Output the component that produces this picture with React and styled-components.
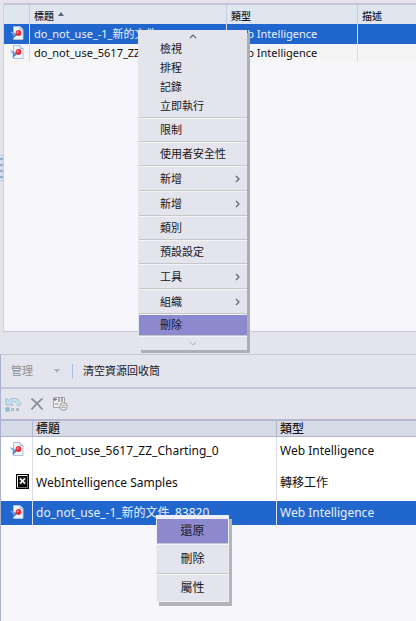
import React from "react";
import styled, { createGlobalStyle, css } from "styled-components";

const GlobalStyle = createGlobalStyle`
  * { box-sizing: border-box; }
  body {
    margin: 0;
    background: #f6f6fb;
    color: #17171c;
    font-family: "Noto Sans", "Noto Sans CJK TC", sans-serif;
  }
  button { font-family: inherit; color: inherit; }
`;

const Page = styled.main`
  display: flex;
  flex-direction: column;
  min-height: 100vh;
  overflow: hidden;
`;

const UpperPane = styled.section`
  position: relative;
  display: flex;
  background: #e4e4ec;
  padding: 3px 0 22px;
`;

const Splitter = styled.div`
  display: flex;
  align-items: center;
  width: 4px;
  border-right: 1px solid #cfcfdd;
`;

const Grip = styled.div`
  width: 4px;
  height: 28px;
  background: repeating-linear-gradient(#d3daea 0 4px, #9aacce 4px 6px);
`;

const ListBody = styled.div`
  flex: 1;
  min-height: 329px;
  background: #f6f6fb;
  border-top: 2px solid #c5c5d7;
  border-bottom: 1px solid #c9c9da;
`;

const Table = styled.table`
  width: 100%;
  table-layout: fixed;
  border-collapse: separate;
  border-spacing: 0;
  font-size: ${(p) => (p.$large ? 12 : 11)}px;
  line-height: 16px;
`;

const Col = styled.col`
  width: ${(p) => p.$width};
`;

const HeadCell = styled.th`
  height: 19px;
  padding: 2px 4px 0;
  text-align: left;
  font-size: 10px;
  line-height: 16px;
  font-weight: 500;
  background: #dfe6f0;
  border-right: 1px solid #c9cfde;
  white-space: nowrap;
  &:last-child { border-right: 0; }
  ${(p) => p.$large && css`
    height: 18px;
    padding: 0 3px;
    font-size: 12px;
    line-height: 15px;
    background: #d5dce8;
    border-top: 2px solid #b6b6cc;
    border-bottom: 1px solid #b0b0c8;
    border-right-color: #b6b6cc;
  `}
`;

const SortButton = styled.button`
  display: flex;
  align-items: center;
  gap: 4px;
  padding: 0;
  border: 0;
  background: none;
  font-size: inherit;
  font-weight: inherit;
  line-height: inherit;
  svg { margin-bottom: 4px; }
`;

const Row = styled.tr`
  height: ${(p) => p.$height}px;
  background: ${(p) => (p.$selected ? "#2166cc" : p.$plain ? "#f5f5f5" : "#ffffff")};
  color: ${(p) => (p.$selected ? "#eaf1ff" : "#101014")};
`;

const Cell = styled.td`
  padding: 0 4px;
  border-right: 1px solid #dcdce6;
  white-space: nowrap;
  overflow: hidden;
  &:last-child { border-right: 0; }
  ${(p) => p.$large && css`padding: 0 3px;`}
`;

const IconCell = styled(Cell)`
  padding: 0 3px 3px;
  text-align: ${(p) => (p.$end ? "right" : "center")};
  line-height: 14px;
  svg { display: inline-block; vertical-align: middle; }
`;

const LowerPane = styled.section`
  flex: 1;
  position: relative;
  border-left: 1px solid #a9b1cd;
  border-top: 1px solid #c5c5d7;
`;

const Toolbar = styled.div`
  display: flex;
  align-items: center;
  background: #e4e4ec;
  height: 32px;
  padding: 0 10px;
  font-size: 11px;
  ${(p) => p.$icons && css`
    padding: 0 4px;
    gap: 8px;
    border-top: 2px solid #c5c5d9;
  `}
`;

const ToolButton = styled.button`
  display: flex;
  align-items: center;
  gap: 21px;
  padding: 0;
  border: 0;
  background: none;
  font-size: 11px;
  line-height: 16px;
  white-space: nowrap;
  &:disabled { color: #91919b; }
`;

const Divider = styled.span`
  width: 1px;
  height: 15px;
  margin: 0 10px 0 12px;
  background: #a7c2e2;
`;

const MenuBase = styled.div`
  position: absolute;
  z-index: 1;
  display: flex;
  flex-direction: column;
  background: #e4e4ec;
`;

const LongMenu = styled(MenuBase)`
  left: 138px;
  top: 30px;
  width: 109px;
  padding: 0 0 0 1px;
  box-shadow: 3px 3px 0 #adadb4;
`;

const ShortMenu = styled(MenuBase)`
  left: 155px;
  top: 160px;
  width: 73px;
  border: 1px solid #eeeef3;
  border-top: 4px solid #eeeef5;
  box-shadow: 3px 4px 0 #b4b4bb;
`;

const ScrollButton = styled.button`
  display: flex;
  justify-content: center;
  align-items: flex-end;
  width: 100%;
  height: ${(p) => (p.$last ? 13 : 9)}px;
  padding: ${(p) => (p.$last ? "0 0 4px" : 0)};
  border: 0;
  background: none;
`;

const MenuItem = styled.button`
  display: flex;
  align-items: center;
  justify-content: space-between;
  width: 100%;
  height: ${(p) => p.$height}px;
  padding: 0 5px 0 21px;
  border: 0;
  background: ${(p) => (p.$active ? "#8d89cf" : "none")};
  font-size: 11px;
  line-height: 16px;
  text-align: left;
  white-space: nowrap;
`;

const CenterItem = styled(MenuItem)`
  justify-content: center;
  padding: 0;
  font-size: 12px;
`;

const MenuRule = styled.div`
  height: 2px;
  border-top: 1px solid #c6c7c9;
  background: #f3f4f4;
`;

const Group = styled.div`
  padding: 0 0 2px;
`;

function ReportIcon() {
  return (
    <svg width="14" height="14" viewBox="0 0 14 14" aria-hidden="true">
      <path d="M3.500.5h6.500l3 3v10h-9.500z" fill="#f1f6fd" stroke="#a9c1df" />
      <path d="M10 .5v3h3" fill="#d4e5f7" stroke="#a9c1df" />
      <path d="M0 5.500c2 0 3 1.500 5 2l3 .5-3 3-2.500 2 .5-4z" fill="#4a7fcd" />
      <path d="M1 6l4 3.500" stroke="#b9d4f5" strokeWidth=".7" />
      <circle cx="8.500" cy="7" r="2.900" fill="#e63137" />
      <circle cx="7.700" cy="6.200" r="1" fill="#ff9a95" />
    </svg>
  );
}

function FallbackIcon() {
  return (
    <svg width="13" height="15" viewBox="0 0 13 15" aria-hidden="true">
      <rect width="13" height="15" fill="#000" />
      <path d="M1.500 13.500v-12h10" fill="none" stroke="#eee" />
      <path d="M11.500 2v11.500h-10" fill="none" stroke="#777" />
      <rect x="3" y="3" width="7" height="8" fill="#222" />
      <path d="M4 4.500l5 5M9 4.500l-5 5" stroke="#fff" strokeWidth="1.700" />
    </svg>
  );
}

function SortIcon() {
  return (
    <svg width="6" height="4" viewBox="0 0 6 4" aria-hidden="true">
      <path d="M0 4l3-4 3 4z" fill="#5b6478" />
    </svg>
  );
}

function DropIcon() {
  return (
    <svg width="6" height="4" viewBox="0 0 6 4" aria-hidden="true">
      <path d="M0 0h6l-3 4z" fill="#a3b3c9" />
    </svg>
  );
}

function Chevron({ direction = "right", faint }) {
  const paths = { right: "M2 1l3 3-3 3", up: "M1 5l3-3 3 3", down: "M1 2l3 3 3-3" };
  return (
    <svg width="8" height={direction === "right" ? 8 : 6} aria-hidden="true">
      <path d={paths[direction]} fill="none" stroke={faint ? "#c0c0c6" : "#66666e"} strokeWidth="1.200" />
    </svg>
  );
}

function UndoIcon() {
  return (
    <svg width="17" height="16" viewBox="0 0 17 16" aria-hidden="true">
      <path d="M1 2v7h7L5.500 6.500c3-2 6-1 7.500 3.500l3-1.500C14.500 2 8 .5 3.500 4.500z" fill="#c5e0ee" stroke="#8fbdd3" strokeWidth=".8" />
      <rect x="1" y="12" width="3" height="3" fill="#9fcbe2" stroke="#7aaec8" />
      <path d="M6.500 12.500h2v2h-2zM11.500 12.500h2v2h-2z" fill="#f3f3f3" stroke="#aaa" />
    </svg>
  );
}

function CloseIcon() {
  return (
    <svg width="14" height="14" viewBox="0 0 14 14" aria-hidden="true">
      <path d="M1.500 1.500C6 5 9 8 12.500 12.500M12.500 1.500C8 5 5 8 1.500 12.500" fill="none" stroke="#92929a" strokeWidth="2" />
    </svg>
  );
}

function PropertiesIcon() {
  return (
    <svg width="16" height="16" viewBox="0 0 16 16" aria-hidden="true">
      <path d="M1.500 1.500h11v10h-11z" fill="#eeeeef" stroke="#a5a5a8" />
      <path d="M1 3.500h4M3 2v3M7 2v4M10 2v4M3 8h3" stroke="#7f7f84" strokeWidth="1.200" />
      <circle cx="11.500" cy="10.500" r="3.800" fill="#e8e8e8" stroke="#999" />
      <path d="M9.500 9.500h4M9.500 11.500h4" stroke="#aaa" />
    </svg>
  );
}

const quickActions = ["檢視", "排程", "記錄", "立即執行"];
const actions = [
  { label: "限制" },
  { label: "使用者安全性" },
  { label: "新增", submenu: true },
  { label: "新增", submenu: true },
  { label: "類別" },
  { label: "預設設定" },
  { label: "工具", submenu: true },
  { label: "組織", submenu: true },
];

export default function App() {
  return (
    <Page>
      <GlobalStyle />
      <UpperPane>
        <Splitter><Grip /></Splitter>
        <ListBody>
          <Table>
            <colgroup>
              <Col $width="26px" /><Col $width="197px" /><Col $width="131px" /><Col $width="auto" />
            </colgroup>
            <thead>
              <tr>
                <HeadCell aria-label="圖示" />
                <HeadCell><SortButton>標題<SortIcon /></SortButton></HeadCell>
                <HeadCell>類型</HeadCell>
                <HeadCell>描述</HeadCell>
              </tr>
            </thead>
            <tbody>
              <Row $height={20} $selected>
                <IconCell><ReportIcon /></IconCell>
                <Cell>do_not_use_-1_新的文件</Cell>
                <Cell>Web Intelligence</Cell>
                <Cell />
              </Row>
              <Row $height={18} $plain>
                <IconCell><ReportIcon /></IconCell>
                <Cell>do_not_use_5617_ZZ</Cell>
                <Cell>Web Intelligence</Cell>
                <Cell />
              </Row>
            </tbody>
          </Table>
        </ListBody>
        <LongMenu role="menu">
          <ScrollButton aria-label="向上捲動"><Chevron direction="up" /></ScrollButton>
          <Group>
            {quickActions.map((label) => (
              <MenuItem key={label} role="menuitem" $height={19}>{label}</MenuItem>
            ))}
          </Group>
          {actions.map((item, i) => (
            <React.Fragment key={i}>
              <MenuRule />
              <MenuItem role="menuitem" $height={item.submenu ? 23 : 22}>
                {item.label}
                {item.submenu && <Chevron />}
              </MenuItem>
            </React.Fragment>
          ))}
          <MenuRule />
          <MenuItem role="menuitem" $height={20} $active>刪除</MenuItem>
          <MenuRule />
          <ScrollButton $last aria-label="向下捲動"><Chevron direction="down" faint /></ScrollButton>
        </LongMenu>
      </UpperPane>

      <LowerPane>
        <Toolbar>
          <ToolButton disabled>管理<DropIcon /></ToolButton>
          <Divider />
          <ToolButton>清空資源回收筒</ToolButton>
        </Toolbar>
        <Toolbar $icons>
          <ToolButton disabled aria-label="復原"><UndoIcon /></ToolButton>
          <ToolButton disabled aria-label="刪除"><CloseIcon /></ToolButton>
          <ToolButton disabled aria-label="屬性"><PropertiesIcon /></ToolButton>
        </Toolbar>
        <Table $large>
          <colgroup>
            <Col $width="32px" /><Col $width="244px" /><Col $width="auto" />
          </colgroup>
          <thead>
            <tr>
              <HeadCell $large aria-label="圖示" />
              <HeadCell $large>標題</HeadCell>
              <HeadCell $large>類型</HeadCell>
            </tr>
          </thead>
          <tbody>
            <Row $height={27}>
              <IconCell><ReportIcon /></IconCell>
              <Cell $large>do_not_use_5617_ZZ_Charting_0</Cell>
              <Cell $large>Web Intelligence</Cell>
            </Row>
            <Row $height={37}>
              <IconCell $end><FallbackIcon /></IconCell>
              <Cell $large>WebIntelligence Samples</Cell>
              <Cell $large>轉移工作</Cell>
            </Row>
            <Row $height={24} $selected>
              <IconCell><ReportIcon /></IconCell>
              <Cell $large>do_not_use_-1_新的文件_83820</Cell>
              <Cell $large>Web Intelligence</Cell>
            </Row>
          </tbody>
        </Table>
        <ShortMenu role="menu">
          <CenterItem role="menuitem" $height={24} $active>還原</CenterItem>
          <MenuRule />
          <CenterItem role="menuitem" $height={28}>刪除</CenterItem>
          <MenuRule />
          <CenterItem role="menuitem" $height={26}>屬性</CenterItem>
        </ShortMenu>
      </LowerPane>
    </Page>
  );
}
